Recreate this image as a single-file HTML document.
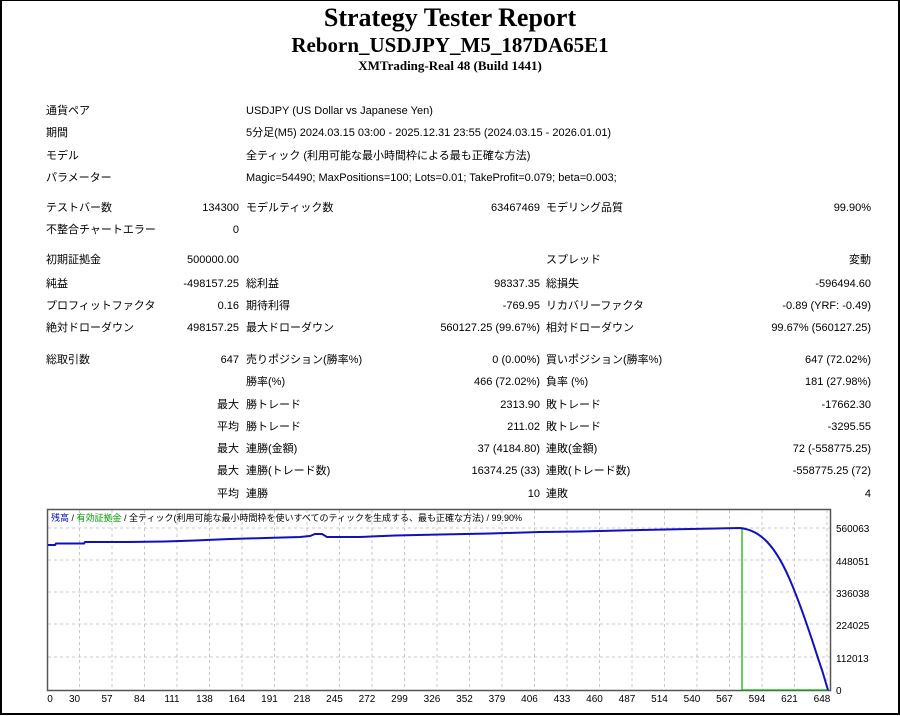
<!DOCTYPE html>
<html><head><meta charset="utf-8"><style>
body{margin:0;width:900px;height:716px;background:#fff;position:relative;overflow:hidden;font-family:"Liberation Sans","Noto Sans CJK JP",sans-serif;font-size:11px;color:#000}
.frame{position:absolute;left:0;top:0;width:896px;height:712px;border:2px solid #000;border-top:1px solid #000}
.t{position:absolute;white-space:nowrap;line-height:14px}
.h{position:absolute;left:0;width:900px;text-align:center;font-family:"Liberation Serif",serif;font-weight:bold}
.r{text-align:right}
</style></head><body>
<div class="frame"></div>
<div class="h" style="top:3px;font-size:26px;line-height:30px">Strategy Tester Report</div>
<div class="h" style="top:33px;font-size:21px;line-height:25px">Reborn_USDJPY_M5_187DA65E1</div>
<div class="h" style="top:58px;font-size:13px;line-height:16px">XMTrading-Real 48 (Build 1441)</div>

<div class="t" style="left:46px;top:104px">通貨ペア</div>
<div class="t" style="left:246px;top:104px">USDJPY (US Dollar vs Japanese Yen)</div>
<div class="t" style="left:46px;top:126px">期間</div>
<div class="t" style="left:246px;top:126px">5分足(M5) 2024.03.15 03:00 - 2025.12.31 23:55 (2024.03.15 - 2026.01.01)</div>
<div class="t" style="left:46px;top:149px">モデル</div>
<div class="t" style="left:246px;top:149px">全ティック (利用可能な最小時間枠による最も正確な方法)</div>
<div class="t" style="left:46px;top:171px">パラメーター</div>
<div class="t" style="left:246px;top:171px">Magic=54490; MaxPositions=100; Lots=0.01; TakeProfit=0.079; beta=0.003;</div>

<div id="rows"></div>
<script>
var R=[
[201,"テストバー数","134300","モデルティック数","63467469","モデリング品質","99.90%"],
[223,"不整合チャートエラー","0","","","",""],
[253,"初期証拠金","500000.00","","","スプレッド","変動"],
[277,"純益","-498157.25","総利益","98337.35","総損失","-596494.60"],
[299,"プロフィットファクタ","0.16","期待利得","-769.95","リカバリーファクタ","-0.89 (YRF: -0.49)"],
[321,"絶対ドローダウン","498157.25","最大ドローダウン","560127.25 (99.67%)","相対ドローダウン","99.67% (560127.25)"],
[353,"総取引数","647","売りポジション(勝率%)","0 (0.00%)","買いポジション(勝率%)","647 (72.02%)"],
[375,"","","勝率(%)","466 (72.02%)","負率 (%)","181 (27.98%)"],
[398,"","最大","勝トレード","2313.90","敗トレード","-17662.30"],
[420,"","平均","勝トレード","211.02","敗トレード","-3295.55"],
[442,"","最大","連勝(金額)","37 (4184.80)","連敗(金額)","72 (-558775.25)"],
[464,"","最大","連勝(トレード数)","16374.25 (33)","連敗(トレード数)","-558775.25 (72)"],
[487,"","平均","連勝","10","連敗","4"]];
var h="";
R.forEach(function(r){var y=r[0];
h+='<div class="t" style="left:46px;top:'+y+'px">'+r[1]+'</div>';
h+='<div class="t r" style="right:661px;top:'+y+'px">'+r[2]+'</div>';
h+='<div class="t" style="left:246px;top:'+y+'px">'+r[3]+'</div>';
h+='<div class="t r" style="right:360px;top:'+y+'px">'+r[4]+'</div>';
h+='<div class="t" style="left:546px;top:'+y+'px">'+r[5]+'</div>';
h+='<div class="t r" style="right:29px;top:'+y+'px">'+r[6]+'</div>';});
document.getElementById("rows").innerHTML=h;
</script>

<svg style="position:absolute;left:0;top:0" width="900" height="716">
<g stroke="#c8c8c8" stroke-dasharray="3,3" stroke-width="1">
<line x1="48" y1="528" x2="830" y2="528"/><line x1="48" y1="560" x2="830" y2="560"/><line x1="48" y1="592" x2="830" y2="592"/><line x1="48" y1="624" x2="830" y2="624"/><line x1="48" y1="657" x2="830" y2="657"/>
</g>
<g id="vgl" stroke="#c8c8c8" stroke-dasharray="3,3"></g>
<rect x="47.5" y="509.5" width="783" height="181" fill="none" stroke="#555" stroke-width="1.5"/>
<polyline fill="none" stroke="#00b000" stroke-width="1.2" points="742,528 742,690 828,690"/>
<path fill="none" stroke="#1010c0" stroke-width="2" d="M48,545 L55,545 L56,543.5 L84,543.5 L85,542 L128,542 L165,541.5 L195,540.5 L230,539 L265,538 L300,537 L310,536 L315,534 L322,534 L327,537 L360,537 L395,535.5 L440,534.5 L490,533.5 L540,532 L580,531.5 L620,530.5 L690,529 L740,528 C760,530 775,545 790,580 C805,615 815,650 822,670 L828,690"/>
<text x="51" y="521" font-size="9" font-family="Liberation Sans,Noto Sans CJK JP,sans-serif"><tspan fill="#1010c0">残高</tspan> / <tspan fill="#00a000">有効証拠金</tspan> / 全ティック(利用可能な最小時間枠を使いすべてのティックを生成する、最も正確な方法) / 99.90%</text>
<g font-size="10" font-family="Liberation Sans,sans-serif">
<text x="836" y="532">560063</text><text x="836" y="565">448051</text><text x="836" y="597">336038</text><text x="836" y="629">224025</text><text x="836" y="662">112013</text><text x="836" y="694">0</text>
</g>
<g id="xl" font-size="10" font-family="Liberation Sans,sans-serif" text-anchor="middle"></g>
</svg>
<script>
var L=[0,30,57,84,111,138,164,191,218,245,272,299,326,352,379,406,433,460,487,514,540,567,594,621,648];
var g=document.getElementById("xl"),v=document.getElementById("vgl"),s="",t="";
L.forEach(function(n,k){var x=47+32.5*k;s+='<text x="'+(k==0?50:x-5)+'" y="702">'+n+'</text>';if(k>0)t+='<line x1="'+x+'" y1="510" x2="'+x+'" y2="690"/>';});
g.innerHTML=s;v.innerHTML=t;
</script>
</body></html>
